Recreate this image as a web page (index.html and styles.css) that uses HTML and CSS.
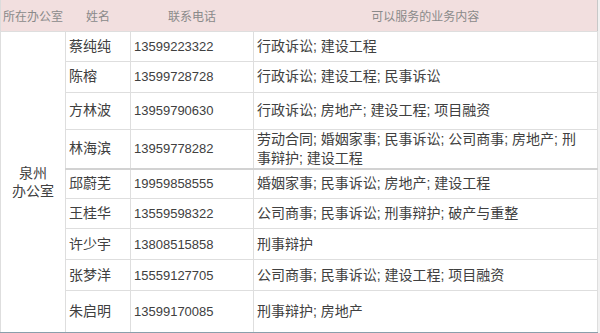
FILE: index.html
```html
<!DOCTYPE html>
<html lang="zh">
<head>
<meta charset="utf-8">
<title>泉州办公室</title>
<link rel="stylesheet" href="styles.css">
</head>
<body>
<table class="staff">
  <colgroup>
    <col class="c-office">
    <col class="c-name">
    <col class="c-tel">
    <col class="c-biz">
  </colgroup>
  <thead>
    <tr class="head">
      <th class="left">所在办公室</th>
      <th>姓名</th>
      <th>联系电话</th>
      <th>可以服务的业务内容</th>
    </tr>
  </thead>
  <tbody>
    <tr class="h30">
      <td class="office" rowspan="9">泉州<br>办公室</td>
      <td>蔡纯纯</td>
      <td class="tel">13599223322</td>
      <td>行政诉讼; 建设工程</td>
    </tr>
    <tr class="h31">
      <td>陈榕</td>
      <td class="tel">13599728728</td>
      <td>行政诉讼; 建设工程; 民事诉讼</td>
    </tr>
    <tr class="h37">
      <td>方林波</td>
      <td class="tel">13959790630</td>
      <td>行政诉讼; 房地产; 建设工程; 项目融资</td>
    </tr>
    <tr class="h38">
      <td>林海滨</td>
      <td class="tel">13959778282</td>
      <td class="wrap">劳动合同; 婚姻家事; 民事诉讼; 公司商事; 房地产; 刑事辩护; 建设工程</td>
    </tr>
    <tr class="h30 sep">
      <td>邱蔚芜</td>
      <td class="tel">19959858555</td>
      <td>婚姻家事; 民事诉讼; 房地产; 建设工程</td>
    </tr>
    <tr class="h30">
      <td>王桂华</td>
      <td class="tel">13559598322</td>
      <td>公司商事; 民事诉讼; 刑事辩护; 破产与重整</td>
    </tr>
    <tr class="h31">
      <td>许少宇</td>
      <td class="tel">13808515858</td>
      <td>刑事辩护</td>
    </tr>
    <tr class="h31">
      <td>张梦洋</td>
      <td class="tel">15559127705</td>
      <td>公司商事; 民事诉讼; 建设工程; 项目融资</td>
    </tr>
    <tr class="h42">
      <td>朱启明</td>
      <td class="tel">13599170085</td>
      <td>刑事辩护; 房地产</td>
    </tr>
  </tbody>
</table>
</body>
</html>
```

FILE: styles.css
```css
html {
  background: #f1f1f1;
}
body {
  margin: 0;
  font-family: "Liberation Sans", "Noto Sans CJK SC", sans-serif;
  color: #404040;
}
.staff {
  width: 597px;
  border-collapse: collapse;
  table-layout: fixed;
  background: #fff;
  border-left: 1px solid #dcdcdc;
  border-right: 1px solid #c8c8c8;
  border-bottom: 2px solid #8a9fab;
}
.c-office { width: 65px; }
.c-name { width: 65px; }
.c-tel { width: 123px; }
.c-biz { width: 344px; }

.head {
  height: 31px;
  background: #f2dfdf;
}
.head th {
  font-size: 12px;
  font-weight: normal;
  color: #8a8a8a;
  text-align: center;
  padding: 0;
  border: none;
}
.head th.left {
  text-align: left;
  padding-left: 2px;
}
td {
  font-size: 14px;
  line-height: 19px;
  padding: 0 8px 0 3px;
  border: 1px solid #dedede;
  vertical-align: middle;
  text-align: left;
}
td.tel {
  font-size: 13px;
}
td.office {
  text-align: center;
  padding: 0;
  line-height: 18px;
}
.h30 { height: 30px; }
.h31 { height: 31px; }
.h37 { height: 37px; }
.h38 { height: 38px; }
.h42 { height: 42px; }
.sep td {
  border-top: 2px solid #d2d2d2;
}
```
